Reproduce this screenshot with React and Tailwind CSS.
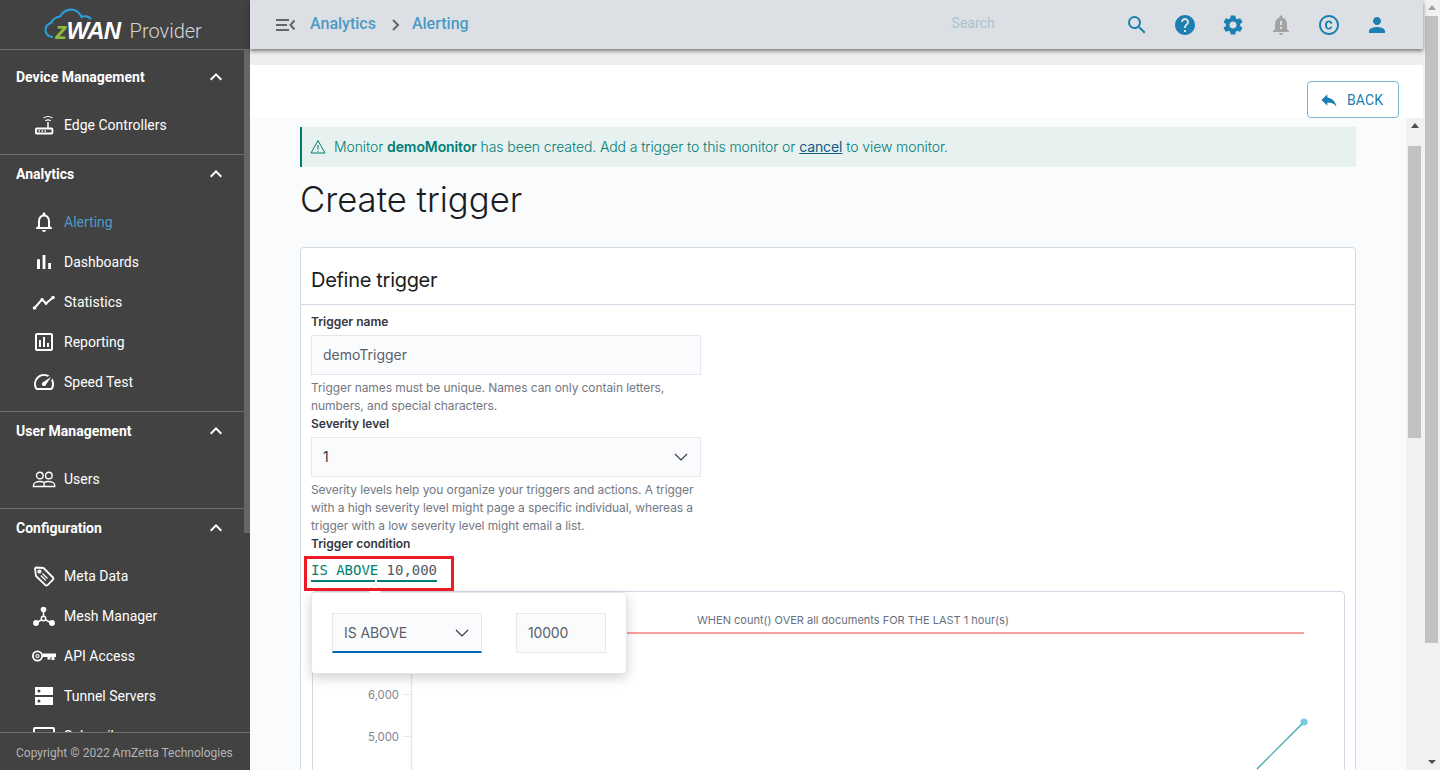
import React from "react";

const W = ({ children, s = 24, cls = "" }) => (
  <svg width={s} height={s} viewBox="0 0 24 24" fill="currentColor" className={cls}>{children}</svg>
);

const Chevron = () => (
  <svg width="24" height="24" viewBox="0 0 24 24" fill="white"><path d="M12 8l-6 6 1.41 1.41L12 10.83l4.59 4.58L18 14z" /></svg>
);

const Router = () => (
  <svg width="24" height="24" viewBox="0 0 24 24" fill="none" stroke="white">
    <rect x="3.900" y="15.500" width="16.500" height="5" rx="0.800" strokeWidth="1.800" />
    <path d="M16 15V9" strokeWidth="1.500" />
    <path d="M13.300 7.800c1.500-1 3.900-1 5.400 0M11.500 5c2.500-1.600 6.500-1.600 9 0" strokeWidth="1.100" />
    <path d="M6.500 18h1.500M9.500 18h1.500M12.500 18h1.500" strokeWidth="1.600" />
  </svg>
);
const Bell = () => (
  <W><path fill="white" d="M12 22c1.1 0 2-.9 2-2h-4c0 1.1.9 2 2 2zm6-6v-5c0-3.07-1.63-5.64-4.5-6.32V4c0-.83-.67-1.5-1.5-1.5s-1.5.67-1.5 1.5v.68C7.64 5.36 6 7.92 6 11v5l-2 2v1h16v-1l-2-2zm-2 1H8v-6c0-2.48 1.51-4.5 4-4.5s4 2.02 4 4.5v6z" /></W>
);
const Bars = () => (
  <W><path fill="white" d="M5 9.2h3V19H5zM10.6 5h2.8v14h-2.8zm5.6 8H19v6h-2.8z" /></W>
);
const Trend = () => (
  <svg width="24" height="24" viewBox="0 0 24 24" fill="white">
    <path d="M2.500 18 10 9.500l4 4L21 7.500" fill="none" stroke="white" strokeWidth="2" />
    <circle cx="2.500" cy="18" r="1.800" /><circle cx="21" cy="7.500" r="1.800" /><circle cx="10" cy="9.500" r="1.400" /><circle cx="14" cy="13.500" r="1.400" />
  </svg>
);
const Report = () => (
  <W><path fill="white" d="M19 3H5c-1.1 0-2 .9-2 2v14c0 1.1.9 2 2 2h14c1.1 0 2-.9 2-2V5c0-1.1-.9-2-2-2zm0 16H5V5h14v14zM7 10h2v7H7zm4-3h2v10h-2zm4 6h2v4h-2z" /></W>
);
const Gauge = () => (
  <W><path fill="white" d="M20.38 8.57l-1.23 1.85a8 8 0 0 1-.22 7.58H5.07A8 8 0 0 1 15.58 6.85l1.85-1.23A10 10 0 0 0 3.35 19a2 2 0 0 0 1.72 1h13.85a2 2 0 0 0 1.74-1 10 10 0 0 0-.27-10.44zm-9.79 6.84a2 2 0 0 0 2.83 0l5.66-8.49-8.49 5.66a2 2 0 0 0 0 2.83z" /></W>
);
const Users = () => (
  <svg width="24" height="24" viewBox="0 0 24 24" fill="none" stroke="white" strokeWidth="1.400">
    <circle cx="7.800" cy="8.500" r="3.300" /><circle cx="16.800" cy="8.500" r="3.300" />
    <path d="M1.500 19.500V18c0-2 2.800-3.500 6.300-3.500 1.800 0 3.300.4 4.300 1 1-.6 2.500-1 4.300-1 3.500 0 6.300 1.500 6.300 3.500v1.500zM12.100 15.500v4" />
  </svg>
);
const Tag = () => (
  <svg width="24" height="24" viewBox="0 0 24 24" fill="none" stroke="white" strokeWidth="1.800">
    <path d="M3 4.500 4 3.500l7.500.5 9.500 9.500a1.500 1.500 0 0 1 0 2.100l-5.500 5.500a1.500 1.500 0 0 1-2.100 0L4 12z" strokeLinejoin="round" />
    <circle cx="7.500" cy="7.500" r="1.200" /><path d="M10.500 9.500l5 5M8.800 11.500l5 5" strokeWidth="1.300" />
  </svg>
);
const Mesh = () => (
  <svg width="24" height="24" viewBox="0 0 24 24" fill="white">
    <circle cx="11.500" cy="5.500" r="2.800" /><circle cx="4" cy="19" r="2.900" /><circle cx="20" cy="19" r="2.900" />
    <path d="M11.500 6v8M5 18.500l6.500-4 7 4" strokeWidth="1.500" stroke="white" fill="none" /><circle cx="11.500" cy="14.500" r="2.200" fill="#424242" stroke="white" strokeWidth="1.400" />
  </svg>
);
const Key = () => (
  <svg width="24" height="24" viewBox="0 0 24 24" fill="none" stroke="white">
    <circle cx="5.500" cy="12" r="4.600" strokeWidth="1.800" /><circle cx="5.500" cy="12" r="1.500" strokeWidth="1.200" />
    <path d="M10.500 9.500H24V13h-1.500v3h-3v-3h-1v2.500h-3V13h-5z" fill="white" stroke="none" />
  </svg>
);
const Server = () => (
  <W><path fill="white" d="M3 3h18v8H3zm0 10h18v8H3z" /><circle cx="7" cy="7" r="1.500" fill="#424242" /><circle cx="7" cy="17" r="1.500" fill="#424242" /></W>
);
const Subscr = () => (
  <svg width="24" height="24" viewBox="0 0 24 24" fill="none" stroke="white" strokeWidth="2"><rect x="2" y="4" width="20" height="16" rx="1" /></svg>
);

function NavItem({ icon, label, active }) {
  return (
    <div className="flex items-center h-10 pl-8">
      <div className="w-8 flex justify-start shrink-0">{icon}</div>
      <span className={`text-sm font-normal ${active ? "text-[#4c9ac4] font-medium" : "text-white"}`}>{label}</span>
    </div>
  );
}

function Group({ title, children, last, first }) {
  return (
    <div className={`pb-[9px] ${first ? "pt-2" : ""} ${last ? "" : "border-b border-[#6f6f6f]"}`}>
      <div className="flex items-center justify-between h-[38px] mb-[9px] pl-4 pr-4">
        <span className="text-sm font-bold text-white">{title}</span>
        <Chevron />
      </div>
      <div>{children}</div>
    </div>
  );
}

function Sidebar() {
  return (
    <aside className="w-[250px] shrink-0 h-full bg-[#424242] flex flex-col font-['Roboto',sans-serif]">
      <div className="h-[50px] shrink-0 relative border-b border-[#6f6f6f] flex items-center pl-[55px] pt-[13px]">
        <svg width="70" height="36" viewBox="0 0 70 36" fill="none" className="absolute left-[44px] top-[7px]">
          <path d="M8 30C3.500 29.500 1.500 26 1.500 23c0-3.500 2.500-6 5.500-7 2-4 5-6 9-6.500C19 4 25 1.500 30 3c3.500 1 6 3.500 7.500 7 3-1.500 7-.5 9 1.500" stroke="#2f9bd6" strokeWidth="2.200" strokeLinecap="round" />
        </svg>
        <span className="relative text-[24px] leading-none font-bold italic tracking-[-0.6px] font-['Liberation_Sans',sans-serif]">
          <span className="text-[#8dba3d]">z</span><span className="text-white">WAN</span>
        </span>
        <span className="relative text-[20px] leading-none font-light text-[#d7d7d7] ml-[9px]">Provider</span>
      </div>
      <div className="flex-1 min-h-0 flex">
        <div className="w-[244px] overflow-hidden">
          <Group title="Device Management" first>
            <NavItem icon={<Router />} label="Edge Controllers" />
          </Group>
          <Group title="Analytics">
            <NavItem icon={<Bell />} label="Alerting" active />
            <NavItem icon={<Bars />} label="Dashboards" />
            <NavItem icon={<Trend />} label="Statistics" />
            <NavItem icon={<Report />} label="Reporting" />
            <NavItem icon={<Gauge />} label="Speed Test" />
          </Group>
          <Group title="User Management">
            <NavItem icon={<Users />} label="Users" />
          </Group>
          <Group title="Configuration" last>
            <NavItem icon={<Tag />} label="Meta Data" />
            <NavItem icon={<Mesh />} label="Mesh Manager" />
            <NavItem icon={<Key />} label="API Access" />
            <NavItem icon={<Server />} label="Tunnel Servers" />
            <NavItem icon={<Subscr />} label="Subscriber" />
          </Group>
        </div>
        <div className="w-[6px] h-full bg-[#424242]">
          <div className="h-[483px] bg-[#666666]" />
        </div>
      </div>
      <div className="h-[38px] shrink-0 border-t border-[#6f6f6f] bg-[#424242] pl-4 pt-[2px] flex items-center text-xs text-[#b4b4b4]">
        Copyright © 2022 AmZetta Technologies
      </div>
    </aside>
  );
}

function Header() {
  return (
    <header className="h-[49px] shrink-0 bg-[#dce0e4] shadow-[0_2px_4px_rgba(0,0,0,0.5)] flex items-center relative z-10 font-['Roboto',sans-serif]">
      <svg width="20" height="14" viewBox="0 0 20 14" className="ml-[26px] text-[#666]" fill="currentColor">
        <path d="M0 1h13v2H0zM0 6h11v2H0zM0 11h13v2H0z" />
        <path d="M18.500 2.500 14.500 7l4 4.500" fill="none" stroke="currentColor" strokeWidth="2" />
      </svg>
      <span className="ml-[14px] -mt-[2px] text-base font-medium text-[#4c9ac4]">Analytics</span>
      <svg width="10" height="12" viewBox="0 0 10 12" className="ml-[15px] text-[#666]" fill="none" stroke="currentColor" strokeWidth="2"><path d="M2 1l5 5-5 5" /></svg>
      <span className="ml-[11px] -mt-[2px] text-base font-medium text-[#4c9ac4]">Alerting</span>
      <span className="ml-[483px] -mt-[3px] text-sm text-[#a7c3d2] w-[173px]">Search</span>
      <div className="flex items-center gap-6 text-[#1b80b0]">
        <W><path d="M15.500 14h-.79l-.28-.27A6.470 6.470 0 0 0 16 9.500 6.500 6.500 0 1 0 9.500 16c1.610 0 3.090-.59 4.230-1.570l.27.28v.79l5 4.990L20.490 19l-4.990-5zm-6 0C7.010 14 5 11.990 5 9.500S7.010 5 9.500 5 14 7.010 14 9.500 11.990 14 9.500 14z" /></W>
        <W><path d="M12 2C6.480 2 2 6.480 2 12s4.480 10 10 10 10-4.480 10-10S17.520 2 12 2zm1 17h-2v-2h2v2zm2.070-7.750-.9.920C13.450 12.900 13 13.500 13 15h-2v-.5c0-1.100.45-2.100 1.170-2.830l1.240-1.260c.37-.36.59-.86.59-1.410 0-1.100-.9-2-2-2s-2 .9-2 2H8c0-2.210 1.790-4 4-4s4 1.790 4 4c0 .88-.36 1.680-.93 2.250z" /></W>
        <W><path d="M19.140 12.940c.04-.3.060-.61.060-.94 0-.32-.02-.64-.07-.94l2.030-1.580a.490.490 0 0 0 .12-.61l-1.920-3.320a.488.488 0 0 0-.59-.22l-2.390.96c-.5-.38-1.030-.7-1.620-.94l-.36-2.540a.484.484 0 0 0-.48-.41h-3.840c-.24 0-.43.170-.47.410l-.36 2.540c-.59.240-1.130.570-1.620.94l-2.390-.96c-.22-.08-.47 0-.59.220L2.740 8.870c-.12.210-.08.470.12.610l2.030 1.580c-.05.300-.09.630-.09.940s.02.640.07.940l-2.030 1.580a.490.490 0 0 0-.12.610l1.920 3.320c.12.220.37.290.59.220l2.390-.96c.5.380 1.030.7 1.620.94l.36 2.540c.05.240.24.410.48.410h3.840c.24 0 .44-.17.470-.41l.36-2.540c.59-.24 1.130-.56 1.620-.94l2.390.96c.22.080.47 0 .59-.22l1.920-3.320c.12-.22.070-.47-.12-.61l-2.010-1.580zM12 15.600c-1.980 0-3.600-1.620-3.600-3.600s1.620-3.600 3.600-3.600 3.600 1.620 3.600 3.600-1.620 3.600-3.600 3.600z" /></W>
        <W cls="text-[#a3a3a3]"><path d="M12 22c1.100 0 2-.9 2-2h-4c0 1.100.9 2 2 2zm6-6v-5c0-3.070-1.630-5.640-4.500-6.320V4c0-.83-.67-1.500-1.500-1.500s-1.500.67-1.500 1.500v.68C7.640 5.360 6 7.920 6 11v5l-2 2v1h16v-1l-2-2zm-5 0h-2v-2h2v2zm0-4h-2V8h2v4z" /></W>
        <W><path d="M11.880 9.140c1.280.060 1.610 1.150 1.630 1.660h1.790c-.08-1.980-1.490-3.190-3.450-3.190C9.640 7.610 8 9 8 12.140c0 1.940.93 4.240 3.840 4.240 2.220 0 3.410-1.650 3.440-2.950h-1.790c-.3.590-.45 1.380-1.630 1.440-1.310-.040-1.860-1.060-1.860-2.730 0-2.890 1.280-3 1.880-3zM12 2C6.480 2 2 6.480 2 12s4.480 10 10 10 10-4.480 10-10S17.520 2 12 2zm0 18c-4.410 0-8-3.590-8-8s3.590-8 8-8 8 3.590 8 8-3.590 8-8 8z" /></W>
        <W><path d="M12 12c2.210 0 4-1.790 4-4s-1.790-4-4-4-4 1.790-4 4 1.790 4 4 4zm0 2c-2.670 0-8 1.340-8 4v2h16v-2c0-2.660-5.330-4-8-4z" /></W>
      </div>
    </header>
  );
}

function ScrollTrack({ dark, thumbTop, thumbH, bottom }) {
  return (
    <div className="w-[17px] shrink-0 h-full bg-[#f1f1f1] relative">
      <div className={`absolute top-[5px] left-1/2 -translate-x-1/2 w-0 h-0 border-x-[4px] border-x-transparent border-b-[5px] ${dark ? "border-b-[#505050]" : "border-b-[#a3a3a3]"}`} />
      <div className="absolute left-[2px] right-[2px] bg-[#c1c1c1]" style={{ top: thumbTop, height: thumbH }} />
      {bottom && <div className="absolute bottom-[6px] left-1/2 -translate-x-1/2 w-0 h-0 border-x-[4px] border-x-transparent border-t-[4px] border-t-[#505050]" />}
    </div>
  );
}

function Chart() {
  return (
    <div className="absolute left-[11px] top-[343px] w-[1033px] h-[300px] border border-[#d3dae6] rounded-[4px] bg-white overflow-hidden">
      <div className="text-[11px] text-[#69707d] absolute left-[384px] top-[20px] leading-4 whitespace-nowrap">WHEN count() OVER all documents FOR THE LAST 1 hour(s)</div>
      <svg width="1033" height="300" className="absolute inset-0">
        <line x1="98.500" y1="0" x2="98.500" y2="300" stroke="#e6e6e6" strokeWidth="1.500" />
        <line x1="90" y1="102.500" x2="98" y2="102.500" stroke="#e6e6e6" />
        <line x1="90" y1="144.500" x2="98" y2="144.500" stroke="#e6e6e6" />
        <line x1="99" y1="41" x2="991" y2="41" stroke="#f77f7f" strokeWidth="1.500" />
        <line x1="991" y1="130" x2="944" y2="177" stroke="#22a0a8" strokeWidth="1.200" />
        <circle cx="991" cy="130" r="3.500" fill="#79c7e3" />
      </svg>
      <div className="absolute right-[945px] top-[95px] text-[11.300px] leading-4 text-[#81858f]">6,000</div>
      <div className="absolute right-[945px] top-[137px] text-[11.300px] leading-4 text-[#81858f]">5,000</div>
    </div>
  );
}

const Caret = () => (
  <svg width="16" height="16" viewBox="0 0 16 16" fill="none" stroke="#343741" strokeWidth="1.100"><path d="M2 5l6 6 6-6" /></svg>
);

function Form() {
  return (
    <div className="flex-1 min-w-0 bg-[#fafbfd] overflow-hidden px-[50px] pt-[9px] font-['Inter',sans-serif]">
      <div className="w-[1056px] h-10 bg-[#e6f1f0] border-l-2 border-[#017d73] flex items-center pl-[8px] text-sm text-[#017d73]">
        <svg width="16" height="16" viewBox="0 0 16 16" fill="none" stroke="currentColor" strokeWidth="1" className="mr-2"><path d="M8 1.500 15 14H1z" strokeLinejoin="round" /><path d="M8 6v4.500M8 11.800v1" /></svg>
        <span className="font-light tracking-[-0.09px]">Monitor <b className="font-semibold">demoMonitor</b> has been created. Add a trigger to this monitor or <span className="font-normal text-[#0e5a87] underline">cancel</span> to view monitor.</span>
      </div>
      <h1 className="text-[34.700px] font-light text-[#1a1c21] leading-[42px] mt-[11px]">Create trigger</h1>
      <div className="relative mt-[27px] w-[1056px] h-[700px] bg-white border border-[#d3dae6] rounded-[4px]">
        <div className="h-[57px] border-b border-[#d3dae6] flex items-center pl-[10px] text-xl font-normal tracking-[-0.3px] text-[#1a1c21] pt-[8px]">Define trigger</div>
        <div className="pl-[10px] pt-[6px]">
          <div className="text-xs font-semibold text-[#343741] leading-[21px]">Trigger name</div>
          <div className="mt-[3px] w-[390px] h-10 bg-[#fafbfd] border border-[#e4e7ec] flex items-center pl-[11px] text-sm text-[#5a5f6b]">demoTrigger</div>
          <div className="mt-1 w-[390px] text-xs leading-[18px] tracking-[-0.08px] text-[#737883]">Trigger names must be unique. Names can only contain letters, numbers, and special characters.</div>
          <div className="text-xs font-semibold text-[#343741] leading-[18px]">Severity level</div>
          <div className="mt-[4px] w-[390px] h-10 bg-[#fafbfd] border border-[#e4e7ec] flex items-center justify-between pl-[11px] pr-[11px] text-sm text-[#343741]">
            <span>1</span>
            <Caret />
          </div>
          <div className="mt-1 w-[390px] text-xs leading-[18px] tracking-[-0.08px] text-[#737883]">Severity levels help you organize your triggers and actions. A trigger with a high severity level might page a specific individual, whereas a trigger with a low severity level might email a list.</div>
          <div className="text-xs font-semibold text-[#343741] leading-[18px]">Trigger condition</div>
          <div className="mt-[7px] flex font-['DejaVu_Sans_Mono',monospace] text-sm leading-5 text-[#017d73] tracking-[-0.03px]">
            <span className="border-b-2 border-[#017d73] w-[64px] whitespace-nowrap">IS ABOVE</span>
            <span className="border-b-2 border-[#017d73] ml-[2px] w-[60px] text-right text-[#4f5b62]">10,000</span>
          </div>
        </div>
        <Chart />
        <div className="absolute left-[69px] top-[337px] w-[10px] h-[10px] rotate-45 bg-white border-l border-t border-[#e3e6ec] z-20" />
        <div className="absolute left-[3px] top-[308px] w-[150px] h-[35px] border-[3px] border-[#ed1c24] z-30" />
        <div className="absolute left-[10px] top-[344px] w-[316px] h-[82px] bg-white border border-[#e3e6ec] rounded-[4px] shadow-[0_4px_12px_rgba(0,0,0,0.18)] flex items-start pt-5 pl-5 z-10">
          <div className="w-[150px] h-10 bg-[#fafbfd] border border-[#e4e7ec] border-b-2 border-b-[#006bb4] flex items-center justify-between pl-[11px] pr-[11px] text-sm tracking-[-0.1px] text-[#5a5f6b]">
            <span>IS ABOVE</span>
            <Caret />
          </div>
          <div className="ml-[34px] w-[90px] h-10 bg-[#fafbfd] border border-[#e4e7ec] flex items-center pl-[11px] text-sm tracking-[-0.2px] text-[#5a5f6b]">10000</div>
        </div>
      </div>
    </div>
  );
}

export default function App() {
  return (
    <div className="w-[1440px] h-[770px] flex overflow-hidden bg-white">
      <Sidebar />
      <div className="flex-1 min-w-0 flex flex-col h-full bg-[#eeeeee]">
        <Header />
        <div className="h-4 shrink-0" />
        <div className="h-[53px] shrink-0 bg-white flex items-start justify-end pr-6 pt-4 font-['Roboto',sans-serif]">
          <div className="w-[92px] h-[37px] border border-[#7db5d1] rounded-[4px] flex items-center pl-[11px] text-sm font-normal tracking-[0.1px] text-[#1b80b0] bg-white">
            <svg width="20" height="20" viewBox="0 0 24 24" fill="currentColor" className="mr-[8px]"><path d="M10 9V5l-7 7 7 7v-4.100c5 0 8.500 1.600 11 5.100-1-5-4-10-11-11z" /></svg>
            BACK
          </div>
        </div>
        <div className="flex-1 min-h-0 flex">
          <Form />
          <ScrollTrack dark thumbTop={28} thumbH={292} />
        </div>
      </div>
      <ScrollTrack thumbTop={16} thumbH={627} bottom />
    </div>
  );
}
